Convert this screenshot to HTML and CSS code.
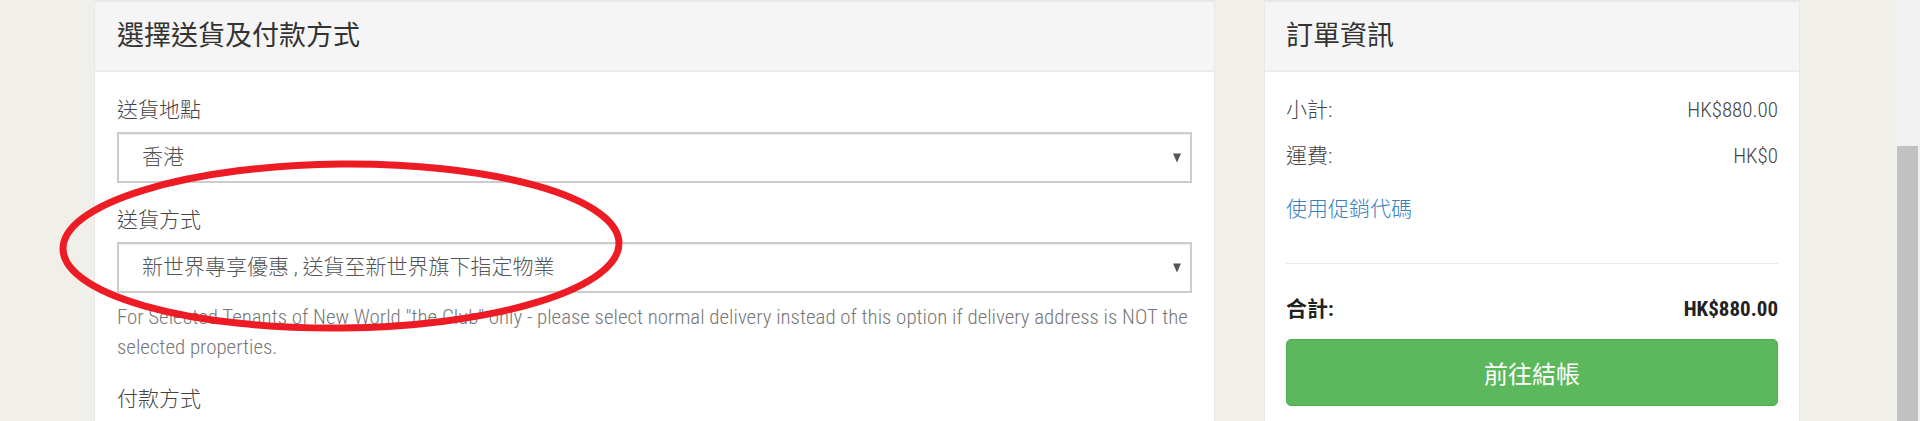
FILE: index.html
```html
<!DOCTYPE html>
<html lang="zh-Hant">
<head>
<meta charset="utf-8">
<title>選擇送貨及付款方式</title>
<link rel="stylesheet" href="styles.css">
</head>
<body>
<div class="page">
  <div class="content">
    <section class="card card-main">
      <header class="card-head"><h2 class="card-title">選擇送貨及付款方式</h2></header>
      <div class="card-body">
        <div class="field">
          <label class="field-label">送貨地點</label>
          <div class="select">
            <span class="select-value">香港</span>
            <svg class="caret" width="8" height="10" viewBox="0 0 8 10"><polygon points="0,0.5 8,0.5 4,9.5" fill="#555"/></svg>
          </div>
        </div>
        <div class="field">
          <label class="field-label">送貨方式</label>
          <div class="select">
            <span class="select-value">新世界專享優惠 , 送貨至新世界旗下指定物業</span>
            <svg class="caret" width="8" height="10" viewBox="0 0 8 10"><polygon points="0,0.5 8,0.5 4,9.5" fill="#555"/></svg>
          </div>
          <p class="help">For Selected Tenants of New World "the Club" only - please select normal delivery instead of this option if delivery address is NOT the selected properties.</p>
        </div>
        <div class="field">
          <label class="field-label">付款方式</label>
        </div>
      </div>
    </section>
    <aside class="card card-side">
      <header class="card-head"><h2 class="card-title">訂單資訊</h2></header>
      <div class="card-body side-body">
        <div class="summary-row"><span>小計:</span><span>HK$880.00</span></div>
        <div class="summary-row row-gap"><span>運費:</span><span>HK$0</span></div>
        <a class="promo" href="#">使用促銷代碼</a>
        <hr class="divider">
        <div class="summary-row total"><span>合計:</span><span>HK$880.00</span></div>
        <button class="checkout" type="button">前往結帳</button>
      </div>
    </aside>
  </div>
  <div class="scrollbar"><div class="thumb"></div></div>
  <svg class="annotation" width="1920" height="421" viewBox="0 0 1920 421">
    <ellipse cx="341" cy="246" rx="278" ry="82" transform="rotate(-0.6 341 246)" fill="none" stroke="#ed1c24" stroke-width="7"/>
  </svg>
</div>
</body>
</html>
```

FILE: styles.css
```css
* { box-sizing: border-box; }

html, body {
  margin: 0;
  padding: 0;
}

body {
  background: #f0efe9;
  font-family: "Roboto Condensed", "Liberation Sans Narrow", Roboto, "Noto Sans CJK TC", sans-serif;
  font-stretch: condensed;
  font-size: 21px;
  font-weight: 300;
  color: #444;
}

.page {
  position: relative;
  display: flex;
  height: 421px;
  overflow: hidden;
}

.content {
  flex: 1;
  display: flex;
  align-items: flex-start;
  gap: 49px;
  padding-left: 94px;
}

.card {
  background: #fff;
  border: 1px solid #e8e8e8;
  border-top-width: 2px;
  min-height: 500px;
}

.card-main { width: 1121px; }
.card-side { width: 536px; }

.card-head {
  height: 70px;
  background: #f5f5f5;
  border-bottom: 2px solid #ebebeb;
  padding: 1px 22px 0;
  display: flex;
  align-items: center;
}

.card-side .card-head { padding: 1px 21px 0; }

.card-title {
  margin: 0;
  font-size: 27px;
  font-weight: 400;
  line-height: 1;
  color: #333;
}

.card-body {
  padding: 23px 22px;
}

.field { margin-bottom: 22px; }

.field-label {
  display: block;
  line-height: 30px;
  margin-bottom: 7px;
  color: #444;
}

.select {
  height: 51px;
  border: 2px solid #ccc;
  background: #fff;
  box-shadow: inset 0 1px 1px rgba(0, 0, 0, 0.075);
  display: flex;
  align-items: center;
  justify-content: space-between;
  padding: 0 9px 0 23px;
  color: #555;
}

.select-value { line-height: 1; }

.caret { display: block; }

.help {
  margin: 9px 0 0;
  line-height: 30px;
  font-size: 20.9px;
  color: #777;
}

.side-body { padding: 23px 21px; }

.summary-row {
  display: flex;
  justify-content: space-between;
  line-height: 30px;
}

.row-gap { margin-top: 16px; }

.promo {
  display: block;
  margin-top: 23px;
  line-height: 30px;
  color: #3a7fc0;
  text-decoration: none;
}

.divider {
  margin: 39px 0 30px;
  border: 0;
  border-top: 1px solid #eaeaea;
  height: 0;
}

.total {
  font-weight: 700;
  color: #222;
}

.checkout {
  display: block;
  width: 100%;
  height: 67px;
  margin-top: 15px;
  background: #5cb85c;
  border: 1px solid #4cae4c;
  border-radius: 5px;
  color: #fff;
  font-family: inherit;
  font-weight: 400;
  font-size: 24px;
}

.scrollbar {
  width: 25px;
  flex: none;
  background: #f1f1f1;
  padding: 146px 2px 0;
  display: flex;
}

.thumb {
  flex: 1;
  background: #c1c1c1;
}

.annotation {
  position: absolute;
  left: 0;
  top: 0;
  pointer-events: none;
}
```
